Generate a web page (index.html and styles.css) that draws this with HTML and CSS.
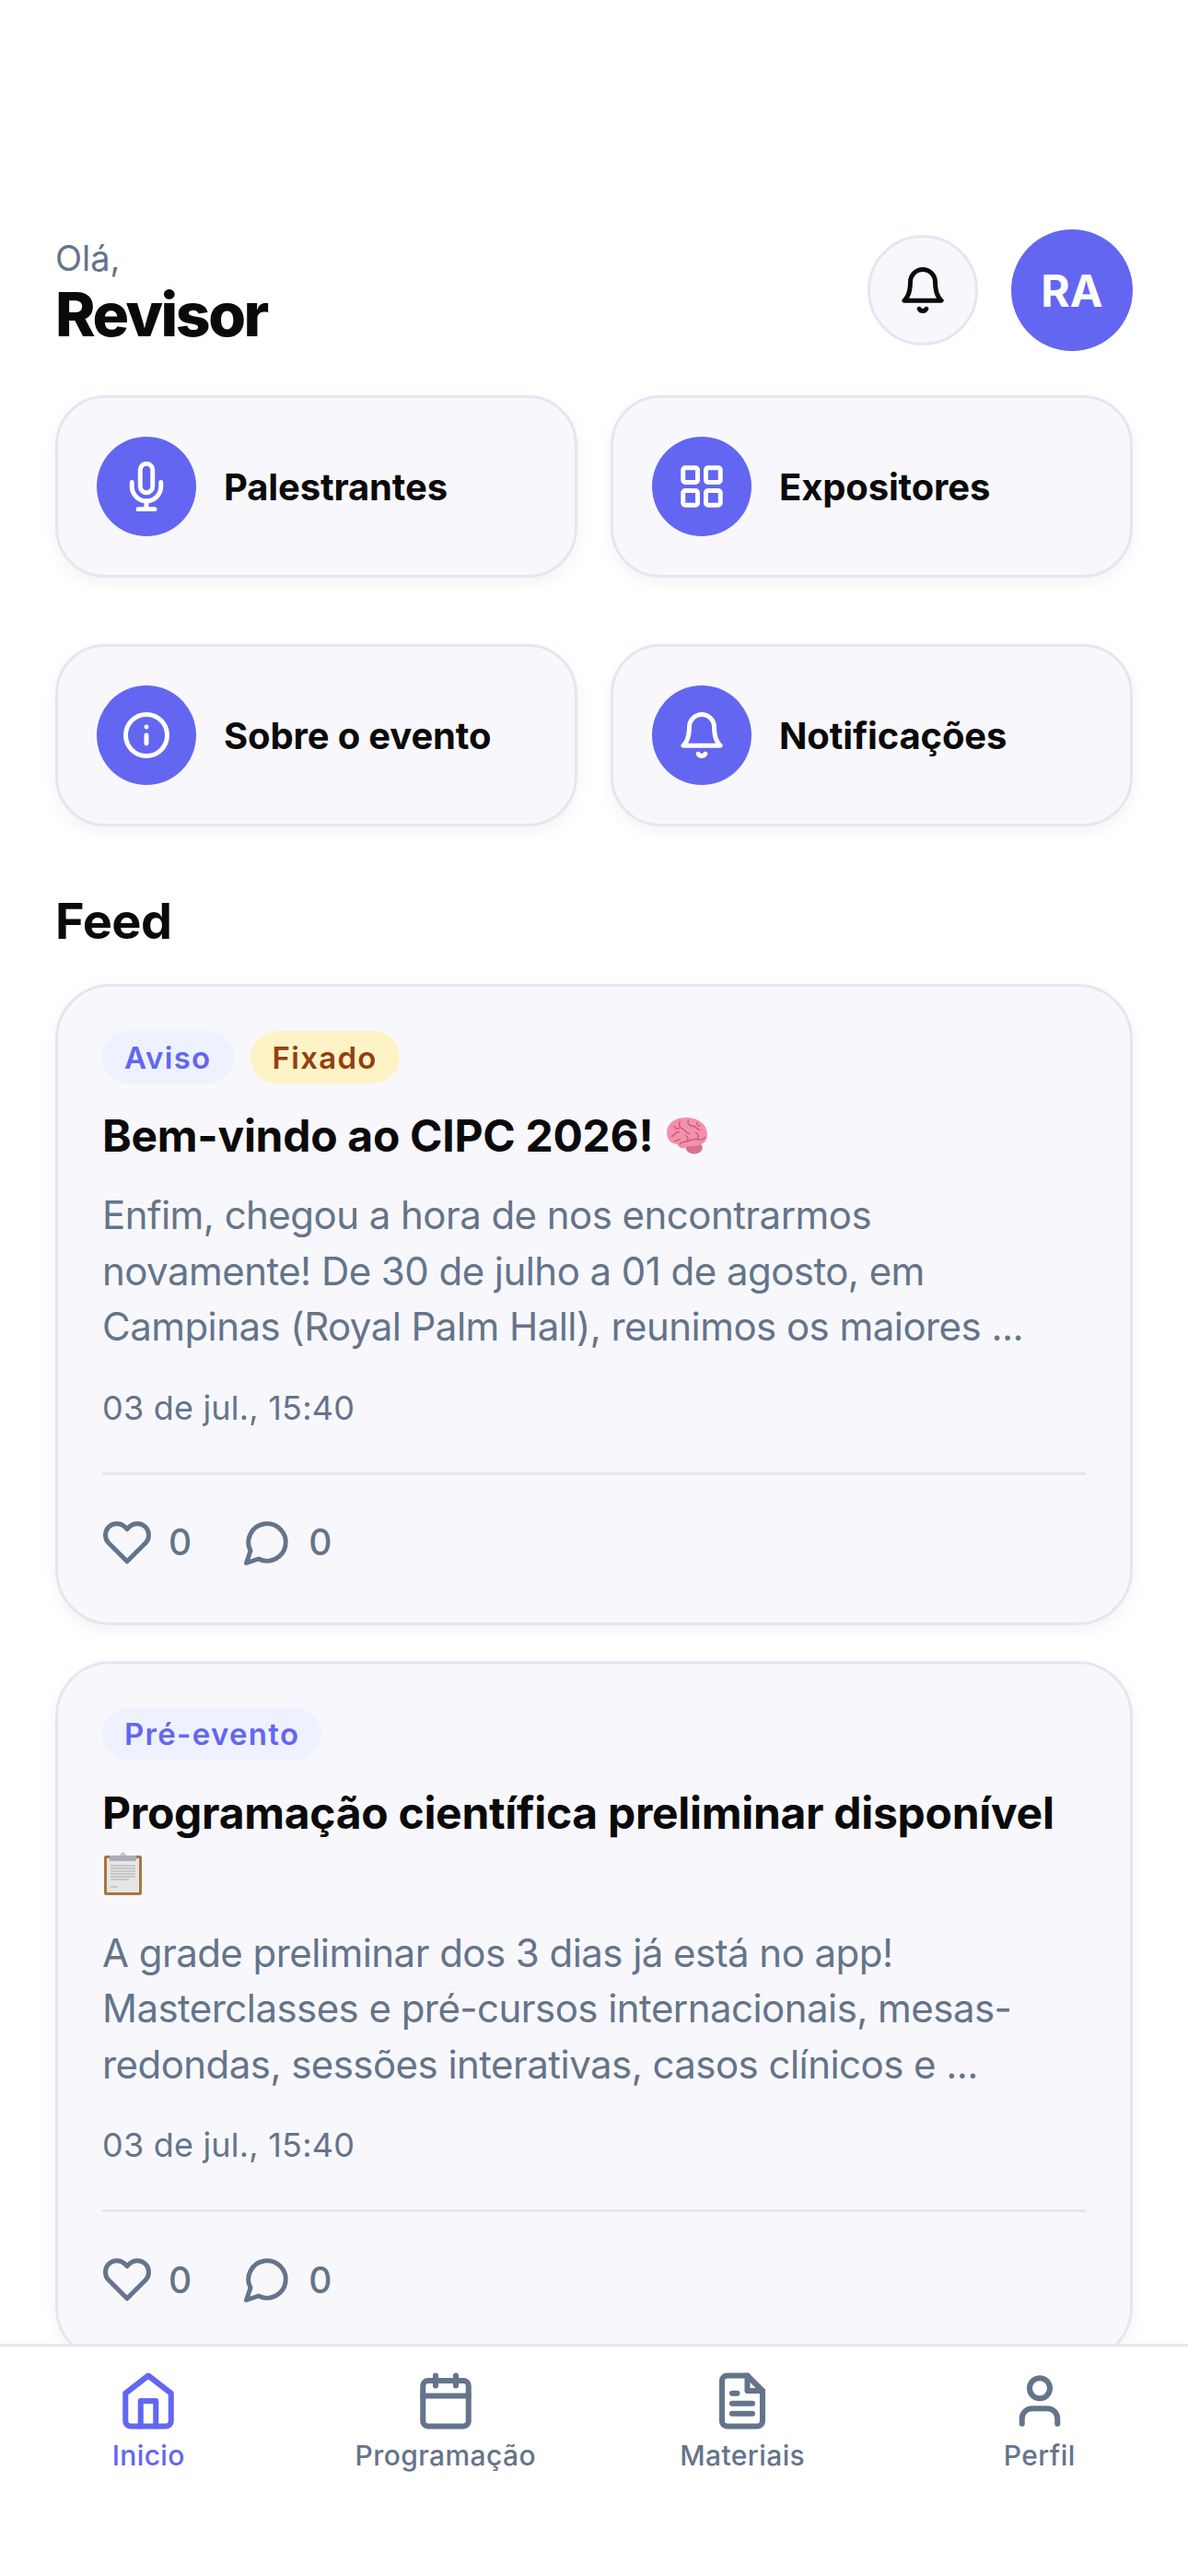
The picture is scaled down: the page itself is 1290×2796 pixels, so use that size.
FILE: index.html
```html
<!DOCTYPE html>
<html lang="pt-BR">
<head>
  <meta charset="UTF-8" />
  <meta name="viewport" content="width=device-width, initial-scale=1.0"/>
  <title>CIPC 2026</title>
  <link rel="stylesheet" href="styles.css">
</head>
<body>
<div class="screen">
  <main class="content">

    <!-- Header -->
    <header class="top">
      <div class="hello">
        <p class="hello-small">Olá,</p>
        <h1 class="hello-name">Revisor</h1>
      </div>
      <div class="top-actions">
        <button class="round-btn">
          <svg class="icon" viewBox="0 0 24 24"><path d="M6 8a6 6 0 0 1 12 0c0 7 3 9 3 9H3s3-2 3-9"/><path d="M10.3 21a1.94 1.94 0 0 0 3.4 0"/></svg>
        </button>
        <div class="avatar">RA</div>
      </div>
    </header>

    <!-- Shortcuts -->
    <section class="tiles">
      <a class="tile">
        <span class="tile-icon">
          <svg class="icon" viewBox="0 0 24 24"><path d="M12 1a3 3 0 0 0-3 3v8a3 3 0 0 0 6 0V4a3 3 0 0 0-3-3z"/><path d="M19 10v2a7 7 0 0 1-14 0v-2"/><path d="M12 19v4"/><path d="M8 23h8"/></svg>
        </span>
        <span class="tile-label">Palestrantes</span>
      </a>
      <a class="tile">
        <span class="tile-icon">
          <svg class="icon" viewBox="0 0 24 24"><rect x="3" y="3" width="7" height="7" rx="1"/><rect x="14" y="3" width="7" height="7" rx="1"/><rect x="14" y="14" width="7" height="7" rx="1"/><rect x="3" y="14" width="7" height="7" rx="1"/></svg>
        </span>
        <span class="tile-label">Expositores</span>
      </a>
      <a class="tile">
        <span class="tile-icon">
          <svg class="icon" viewBox="0 0 24 24"><circle cx="12" cy="12" r="10"/><path d="M12 16v-4"/><path d="M12 8h.01"/></svg>
        </span>
        <span class="tile-label">Sobre o evento</span>
      </a>
      <a class="tile">
        <span class="tile-icon">
          <svg class="icon" viewBox="0 0 24 24"><path d="M6 8a6 6 0 0 1 12 0c0 7 3 9 3 9H3s3-2 3-9"/><path d="M10.3 21a1.94 1.94 0 0 0 3.4 0"/></svg>
        </span>
        <span class="tile-label">Notificações</span>
      </a>
    </section>

    <h2 class="feed-title">Feed</h2>

    <!-- Feed cards -->
    <article class="card">
      <div class="badges">
        <span class="badge">Aviso</span>
        <span class="badge badge-pinned">Fixado</span>
      </div>
      <h3 class="card-title">Bem-vindo ao CIPC 2026!
        <svg class="emoji emoji-brain" viewBox="0 0 46 40">
          <ellipse cx="31" cy="33" rx="9" ry="6.5" fill="#d9738c"/>
          <path d="M2 17C2 7 11 1 22 1c12 0 23 6 23 18 0 8-6 12-13 12-4 0-6 1-9 1-4 3-9 1-10-3C6 29 2 24 2 17z" fill="#f291ab"/>
          <path d="M7 21c3-1 4-5 8-5M10 10c1 3 3 3 5 2M16 5c-2 4 0 7 3 8 3 1 3 5 7 5M25 4c-2 4 2 6 5 6s4 4 7 4M34 6c-1 2 1 3 3 4M10 26c3 0 4-2 6-2M16 29c2-3 6-2 9-3s5-3 9-2 6 1 9-2M22 20c2 1 3 3 2 5M33 17c2 1 3 3 2 6" fill="none" stroke="#cc5674" stroke-width="1.300" stroke-linecap="round"/>
        </svg>
      </h3>
      <p class="card-text">Enfim, chegou a hora de nos encontrarmos novamente! De 30 de julho a 01 de agosto, em Campinas (Royal Palm Hall), reunimos os maiores ...</p>
      <p class="card-date">03 de jul., 15:40</p>
      <div class="card-foot">
        <span class="stat">
          <svg class="icon" viewBox="0 0 24 24"><path d="M20.84 4.61a5.5 5.5 0 0 0-7.78 0L12 5.67l-1.06-1.06a5.5 5.5 0 0 0-7.78 7.78l1.06 1.06L12 21.23l7.78-7.78 1.06-1.06a5.5 5.5 0 0 0 0-7.78z"/></svg>
          0
        </span>
        <span class="stat">
          <svg class="icon" viewBox="0 0 24 24"><path d="M7.9 20A9 9 0 1 0 4 16.1L2 22Z"/></svg>
          0
        </span>
      </div>
    </article>

    <article class="card">
      <div class="badges">
        <span class="badge">Pré-evento</span>
      </div>
      <h3 class="card-title">Programação científica preliminar disponível
        <svg class="emoji emoji-clip" viewBox="0 0 41 47">
          <rect x="0" y="4" width="41" height="43" rx="2" fill="#a9773c"/>
          <rect x="3" y="7" width="35" height="37" fill="#e6e6e6"/>
          <path d="M7 15h27M7 18h27M7 21h27M7 24h27M7 27h27M7 30h20M7 38h8" stroke="#a8a8a8" stroke-width="1"/>
          <rect x="6" y="4" width="29" height="6" rx="1" fill="#a8aeb8"/>
          <path d="M16 4l4.500-4 4.500 4z" fill="#c3c8d0"/>
        </svg>
      </h3>
      <p class="card-text">A grade preliminar dos 3 dias já está no app! Masterclasses e pré-cursos internacionais, mesas-redondas, sessões interativas, casos clínicos e ...</p>
      <p class="card-date">03 de jul., 15:40</p>
      <div class="card-foot">
        <span class="stat">
          <svg class="icon" viewBox="0 0 24 24"><path d="M20.84 4.61a5.5 5.5 0 0 0-7.78 0L12 5.67l-1.06-1.06a5.5 5.5 0 0 0-7.78 7.78l1.06 1.06L12 21.23l7.78-7.78 1.06-1.06a5.5 5.5 0 0 0 0-7.78z"/></svg>
          0
        </span>
        <span class="stat">
          <svg class="icon" viewBox="0 0 24 24"><path d="M7.9 20A9 9 0 1 0 4 16.1L2 22Z"/></svg>
          0
        </span>
      </div>
    </article>
  </main>

  <!-- Bottom navigation -->
  <nav class="tabbar">
    <a class="tab tab-active">
      <svg class="icon" viewBox="0 0 24 24"><path d="m3 9 9-7 9 7v11a2 2 0 0 1-2 2H5a2 2 0 0 1-2-2z"/><path d="M9 22V12h6v10"/></svg>
      Inicio
    </a>
    <a class="tab">
      <svg class="icon" viewBox="0 0 24 24"><rect x="3" y="4" width="18" height="18" rx="2"/><path d="M16 2v4"/><path d="M8 2v4"/><path d="M3 10h18"/></svg>
      Programação
    </a>
    <a class="tab">
      <svg class="icon" viewBox="0 0 24 24"><path d="M14 2H6a2 2 0 0 0-2 2v16a2 2 0 0 0 2 2h12a2 2 0 0 0 2-2V8z"/><path d="M14 2v6h6"/><path d="M16 13H8"/><path d="M16 17H8"/><path d="M10 9H8"/></svg>
      Materiais
    </a>
    <a class="tab">
      <svg class="icon" viewBox="0 0 24 24"><path d="M19 21v-2a4 4 0 0 0-4-4H9a4 4 0 0 0-4 4v2"/><circle cx="12" cy="7" r="4"/></svg>
      Perfil
    </a>
  </nav>
</div>
</body>
</html>
```

FILE: styles.css
```css
* { box-sizing: border-box; }
body { margin: 0; font-family: Inter, "Liberation Sans", sans-serif; background: #fff; color: #0a0a0a; }
h1, h2, h3, p { margin: 0; }

.screen { height: 100vh; display: flex; flex-direction: column; overflow: hidden; }
.content { flex: 1; min-height: 0; overflow: hidden; padding: 249px 60px 0; }

.icon { width: 54px; height: 54px; fill: none; stroke: currentColor; stroke-width: 2.2; stroke-linecap: round; stroke-linejoin: round; flex-shrink: 0; }

/* header */
.top { display: flex; justify-content: space-between; align-items: center; height: 132px; }
.hello { padding-top: 4px; }
.hello-small { font-size: 38px; line-height: 48px; color: #64748b; }
.hello-name { font-size: 66px; line-height: 74px; font-weight: 800; letter-spacing: -2.5px; }
.top-actions { display: flex; align-items: center; gap: 36px; }
.round-btn { width: 120px; height: 120px; border-radius: 50%; border: 3px solid #e2e8f0; background: #f8f8fc; color: #0a0a0a; display: flex; align-items: center; justify-content: center; padding: 0; }
.avatar { width: 132px; height: 132px; border-radius: 50%; background: #6366f1; color: #fff; font-size: 48px; font-weight: 700; display: flex; align-items: center; justify-content: center; }

/* shortcut tiles */
.tiles { display: grid; grid-template-columns: 1fr 1fr; column-gap: 36px; row-gap: 72px; margin-top: 48px; }
.tile { display: flex; align-items: center; gap: 30px; padding: 42px; background: #f8f8fc; border: 3px solid #e2e8f0; border-radius: 54px; box-shadow: 0 6px 18px rgba(15, 23, 42, 0.05); }
.tile-icon { width: 108px; height: 108px; border-radius: 50%; background: #6366f1; color: #fff; display: flex; align-items: center; justify-content: center; }
.tile-label { font-size: 40px; font-weight: 700; letter-spacing: -0.15px; }

.feed-title { font-size: 54px; line-height: 66px; font-weight: 700; letter-spacing: -0.5px; margin-top: 70px; }

/* feed card */
.card { margin-top: 39px; padding: 48px 48px 30px; background: #f8f8fc; border: 3px solid #e2e8f0; border-radius: 60px; box-shadow: 0 6px 18px rgba(15, 23, 42, 0.05); }
.feed-title + .card { margin-top: 35px; }
.badges { display: flex; gap: 18px; }
.badge { height: 57px; padding: 0 24px; border-radius: 30px; background: #eef2ff; color: #6366f1; font-size: 33px; font-weight: 600; letter-spacing: 1.3px; display: flex; align-items: center; }
.badge-pinned { background: #fef3c7; color: #92400e; }
.card-title { margin-top: 24px; font-size: 48px; line-height: 66px; font-weight: 700; letter-spacing: -0.3px; }
.emoji { display: inline-block; vertical-align: -3px; margin-left: 2px; }
.emoji-brain { width: 47px; height: 41px; }
.emoji-clip { width: 41px; height: 47px; vertical-align: -6px; }
.card-text { margin-top: 23px; font-size: 42px; line-height: 60.5px; letter-spacing: -0.55px; color: #64748b; }
.card-date { margin-top: 33px; font-size: 36px; line-height: 48px; letter-spacing: 0.2px; color: #64748b; }
.card-foot { margin-top: 46px; padding-top: 46px; border-top: 3px solid #e2e8f0; display: flex; gap: 55px; padding-bottom: 30px; }
.stat { display: flex; align-items: center; gap: 18px; font-size: 39px; font-weight: 500; color: #64748b; }

/* bottom nav */
.tabbar { height: 252px; flex-shrink: 0; display: grid; grid-template-columns: repeat(4, 1fr); padding-top: 26px; background: #fff; border-top: 3px solid #e2e8f0; align-items: start; }
.tab { display: flex; flex-direction: column; align-items: center; gap: 8px; font-size: 30px; font-weight: 500; color: #64748b; letter-spacing: 0.4px; }
.tab .icon { width: 66px; height: 66px; }
.tab-active { color: #6366f1; }
```
